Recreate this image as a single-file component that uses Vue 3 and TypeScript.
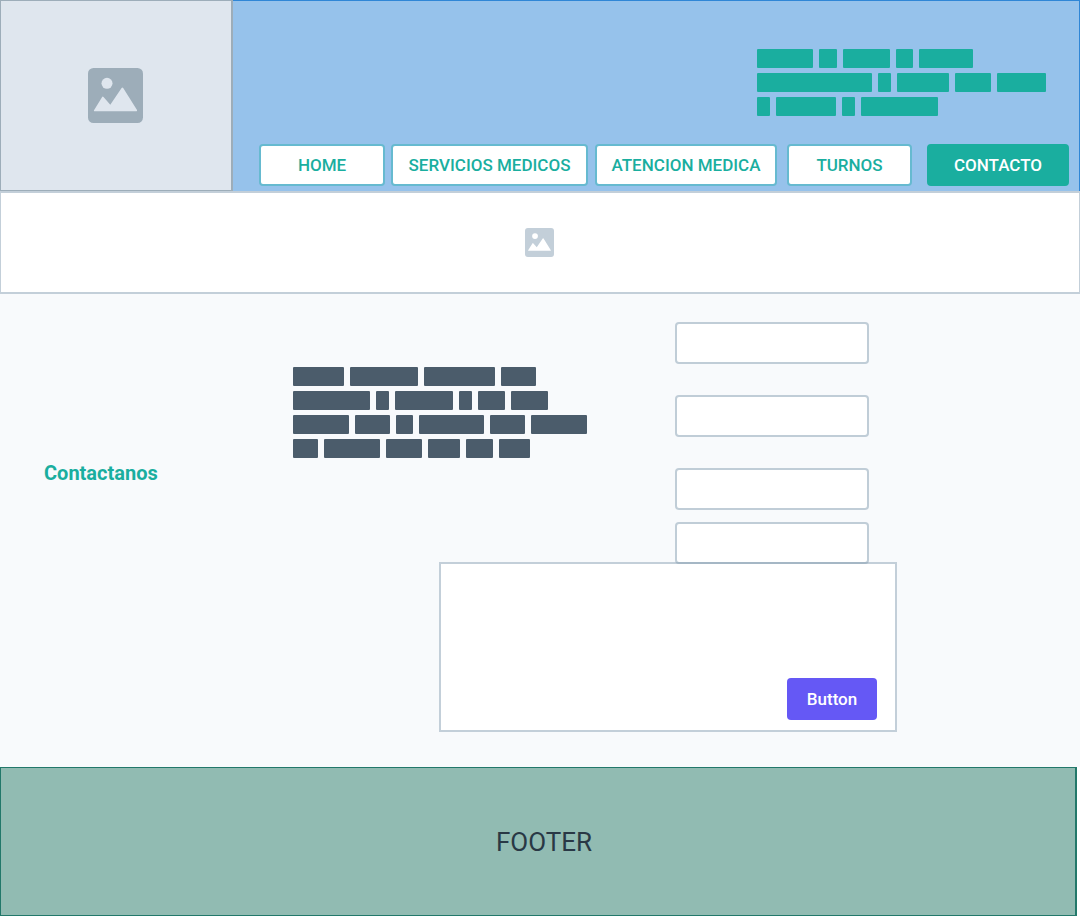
<script setup lang="ts">
interface NavItem {
  label: string
  slug: string
  current?: boolean
}

const navItems: NavItem[] = [
  { label: 'HOME', slug: 'home' },
  { label: 'SERVICIOS MEDICOS', slug: 'servicios' },
  { label: 'ATENCION MEDICA', slug: 'atencion' },
  { label: 'TURNOS', slug: 'turnos' },
  { label: 'CONTACTO', slug: 'contacto', current: true },
]

// Word widths of the placeholder copy, one array per line
const headerCopy: number[][] = [
  [56, 18, 47, 17, 54],
  [115, 13, 52, 36, 49],
  [13, 60, 13, 77],
]

const bodyCopy: number[][] = [
  [51, 68, 71, 35],
  [77, 13, 58, 13, 27, 37],
  [56, 35, 17, 65, 35, 56],
  [25, 56, 36, 32, 27, 31],
]

const fields: string[] = ['nombre', 'apellido', 'email', 'telefono']
</script>

<template>
  <div class="page">
    <header class="header">
      <div class="logo">
        <svg class="icon-large" viewBox="0 0 55 55" aria-hidden="true">
          <rect width="55" height="55" rx="5.5" fill="#9dadb9" />
          <circle cx="19" cy="15.3" r="5.5" fill="#dfe6ee" />
          <path d="M6 42.2 L14 29.2 Q14.7 28 15.5 29 L22.3 36.7 L33.6 20 Q34.4 19 35.2 20 L49 42 Q49.3 43.2 48.4 43.2 H6.4 Q5.6 43.2 6 42.2 Z" fill="#dfe6ee" />
        </svg>
      </div>
      <div class="masthead">
        <div class="copy copy-header">
          <div v-for="(line, i) in headerCopy" :key="i" class="line">
            <span v-for="(w, j) in line" :key="j" class="word" :style="{ width: w + 'px' }"></span>
          </div>
        </div>
        <nav class="nav">
          <a
            v-for="item in navItems"
            :key="item.slug"
            :href="'#' + item.slug"
            :class="['nav-link', item.slug]"
            :aria-current="item.current ? 'page' : undefined"
          >{{ item.label }}</a>
        </nav>
      </div>
    </header>

    <div class="banner">
      <svg class="icon-small" viewBox="0 0 55 55" aria-hidden="true">
        <rect width="55" height="55" rx="5.5" fill="#c3cfd9" />
        <circle cx="19" cy="15.3" r="5.5" fill="#fff" />
        <path d="M6 42.2 L14 29.2 Q14.7 28 15.5 29 L22.3 36.7 L33.6 20 Q34.4 19 35.2 20 L49 42 Q49.3 43.2 48.4 43.2 H6.4 Q5.6 43.2 6 42.2 Z" fill="#fff" />
      </svg>
    </div>

    <main class="contact">
      <h1 class="title">Contactanos</h1>
      <div class="copy copy-body">
        <div v-for="(line, i) in bodyCopy" :key="i" class="line">
          <span v-for="(w, j) in line" :key="j" class="word" :style="{ width: w + 'px' }"></span>
        </div>
      </div>
      <form class="form" @submit.prevent>
        <div class="fields">
          <input v-for="f in fields" :key="f" class="field" type="text" :name="f" :aria-label="f" />
        </div>
        <div class="message">
          <textarea class="message-text" name="mensaje" aria-label="mensaje"></textarea>
          <button class="submit" type="submit">Button</button>
        </div>
      </form>
    </main>

    <footer class="footer">FOOTER</footer>
  </div>
</template>

<style>
body {
  margin: 0;
  background: #fff;
}
</style>

<style scoped>
.page,
.page * {
  box-sizing: border-box;
}

.page {
  display: flex;
  flex-direction: column;
  min-height: 100vh;
  font-family: Roboto, "Liberation Sans", sans-serif;
}

.header {
  display: flex;
  min-height: 191px;
}

.logo {
  display: flex;
  flex: 0 0 233px;
  align-items: center;
  justify-content: center;
  padding-right: 2px;
  background: #dfe6ee;
  border: 1px solid #9dadb9;
  border-right-width: 2px;
}

.icon-large {
  width: 55px;
  height: 55px;
}

.icon-small {
  width: 29px;
  height: 29px;
}

.masthead {
  display: flex;
  flex: 1;
  flex-direction: column;
  align-items: flex-end;
  justify-content: space-between;
  padding: 48px 10px 5px 26px;
  background: #96c2eb;
  border-top: 1px solid #2f86d6;
  border-right: 1px solid #2f86d6;
}

.copy {
  display: flex;
  flex-direction: column;
  gap: 5px;
}

.copy-header {
  margin-right: 23px;
  color: #1aae9f;
}

.copy-body {
  grid-area: 1 / 2 / 2 / 4;
  align-self: start;
  margin-top: 45px;
  color: #4b5c6b;
}

.line {
  display: flex;
  gap: 6px;
}

.word {
  height: 19px;
  background: currentColor;
  border-radius: 1px;
}

.nav {
  display: flex;
}

.nav-link {
  display: flex;
  align-items: center;
  justify-content: center;
  width: 126px;
  height: 42px;
  padding-bottom: 1px;
  background: #fff;
  border: 2px solid #66bad0;
  border-radius: 4px;
  color: #1aae9f;
  font-size: 17px;
  font-weight: 500;
  text-decoration: none;
  white-space: nowrap;
}

.servicios {
  width: 197px;
  margin-left: 6px;
}

.atencion {
  width: 182px;
  margin-left: 7px;
}

.turnos {
  width: 125px;
  margin-left: 10px;
}

.contacto {
  width: 142px;
  margin-left: 15px;
  background: #1aae9f;
  border-color: #1aae9f;
  color: #fff;
}

.banner {
  display: flex;
  align-items: center;
  justify-content: center;
  height: 103px;
  padding-right: 1px;
  background: #fff;
  border: 2px solid #c3cfd9;
  border-width: 2px 1px;
}

.contact {
  display: grid;
  grid-template-columns:
    minmax(0, 249fr) minmax(0, 146fr) minmax(0, 236fr)
    minmax(0, 194fr) minmax(0, 28fr) minmax(0, 183fr);
  padding: 28px 0 35px 44px;
  background: #f8fafc;
}

.title {
  grid-area: 1 / 1 / 3 / 2;
  margin: 139px 0 0;
  color: #1aae9f;
  font-size: 20px;
  font-weight: 700;
  line-height: 24px;
}

.form {
  display: contents;
}

.fields {
  position: relative;
  z-index: 1;
  grid-area: 1 / 4 / 2 / 5;
  display: flex;
  flex-direction: column;
  gap: 31px;
}

.field {
  width: 100%;
  height: 42px;
  padding: 0 12px;
  background: #fff;
  background-clip: padding-box;
  border: 2px solid rgba(136, 160, 178, 0.5);
  border-radius: 4px;
  font: inherit;
}

.field:last-child {
  margin-top: -19px;
}

.message {
  grid-area: 2 / 3 / 3 / 6;
  display: grid;
  height: 170px;
  margin-top: -2px;
  background: #fff;
  border: 2px solid #c3cfd9;
}

.message-text {
  grid-area: 1 / 1;
  padding: 12px;
  background: transparent;
  border: 0;
  font: inherit;
  resize: none;
}

.submit {
  grid-area: 1 / 1;
  place-self: end;
  width: 90px;
  height: 42px;
  margin: 0 18px 10px 0;
  padding: 0;
  background: #6558f5;
  border: 0;
  border-radius: 4px;
  color: #fff;
  font: inherit;
  font-size: 17px;
  font-weight: 500;
}

.footer {
  display: flex;
  flex: 1;
  align-items: center;
  justify-content: center;
  min-height: 149px;
  margin-right: 3px;
  padding-left: 12px;
  background: #91bbb2;
  border: 1px solid #22786a;
  border-right-width: 2px;
  color: #293845;
  font-size: 26px;
}
</style>
